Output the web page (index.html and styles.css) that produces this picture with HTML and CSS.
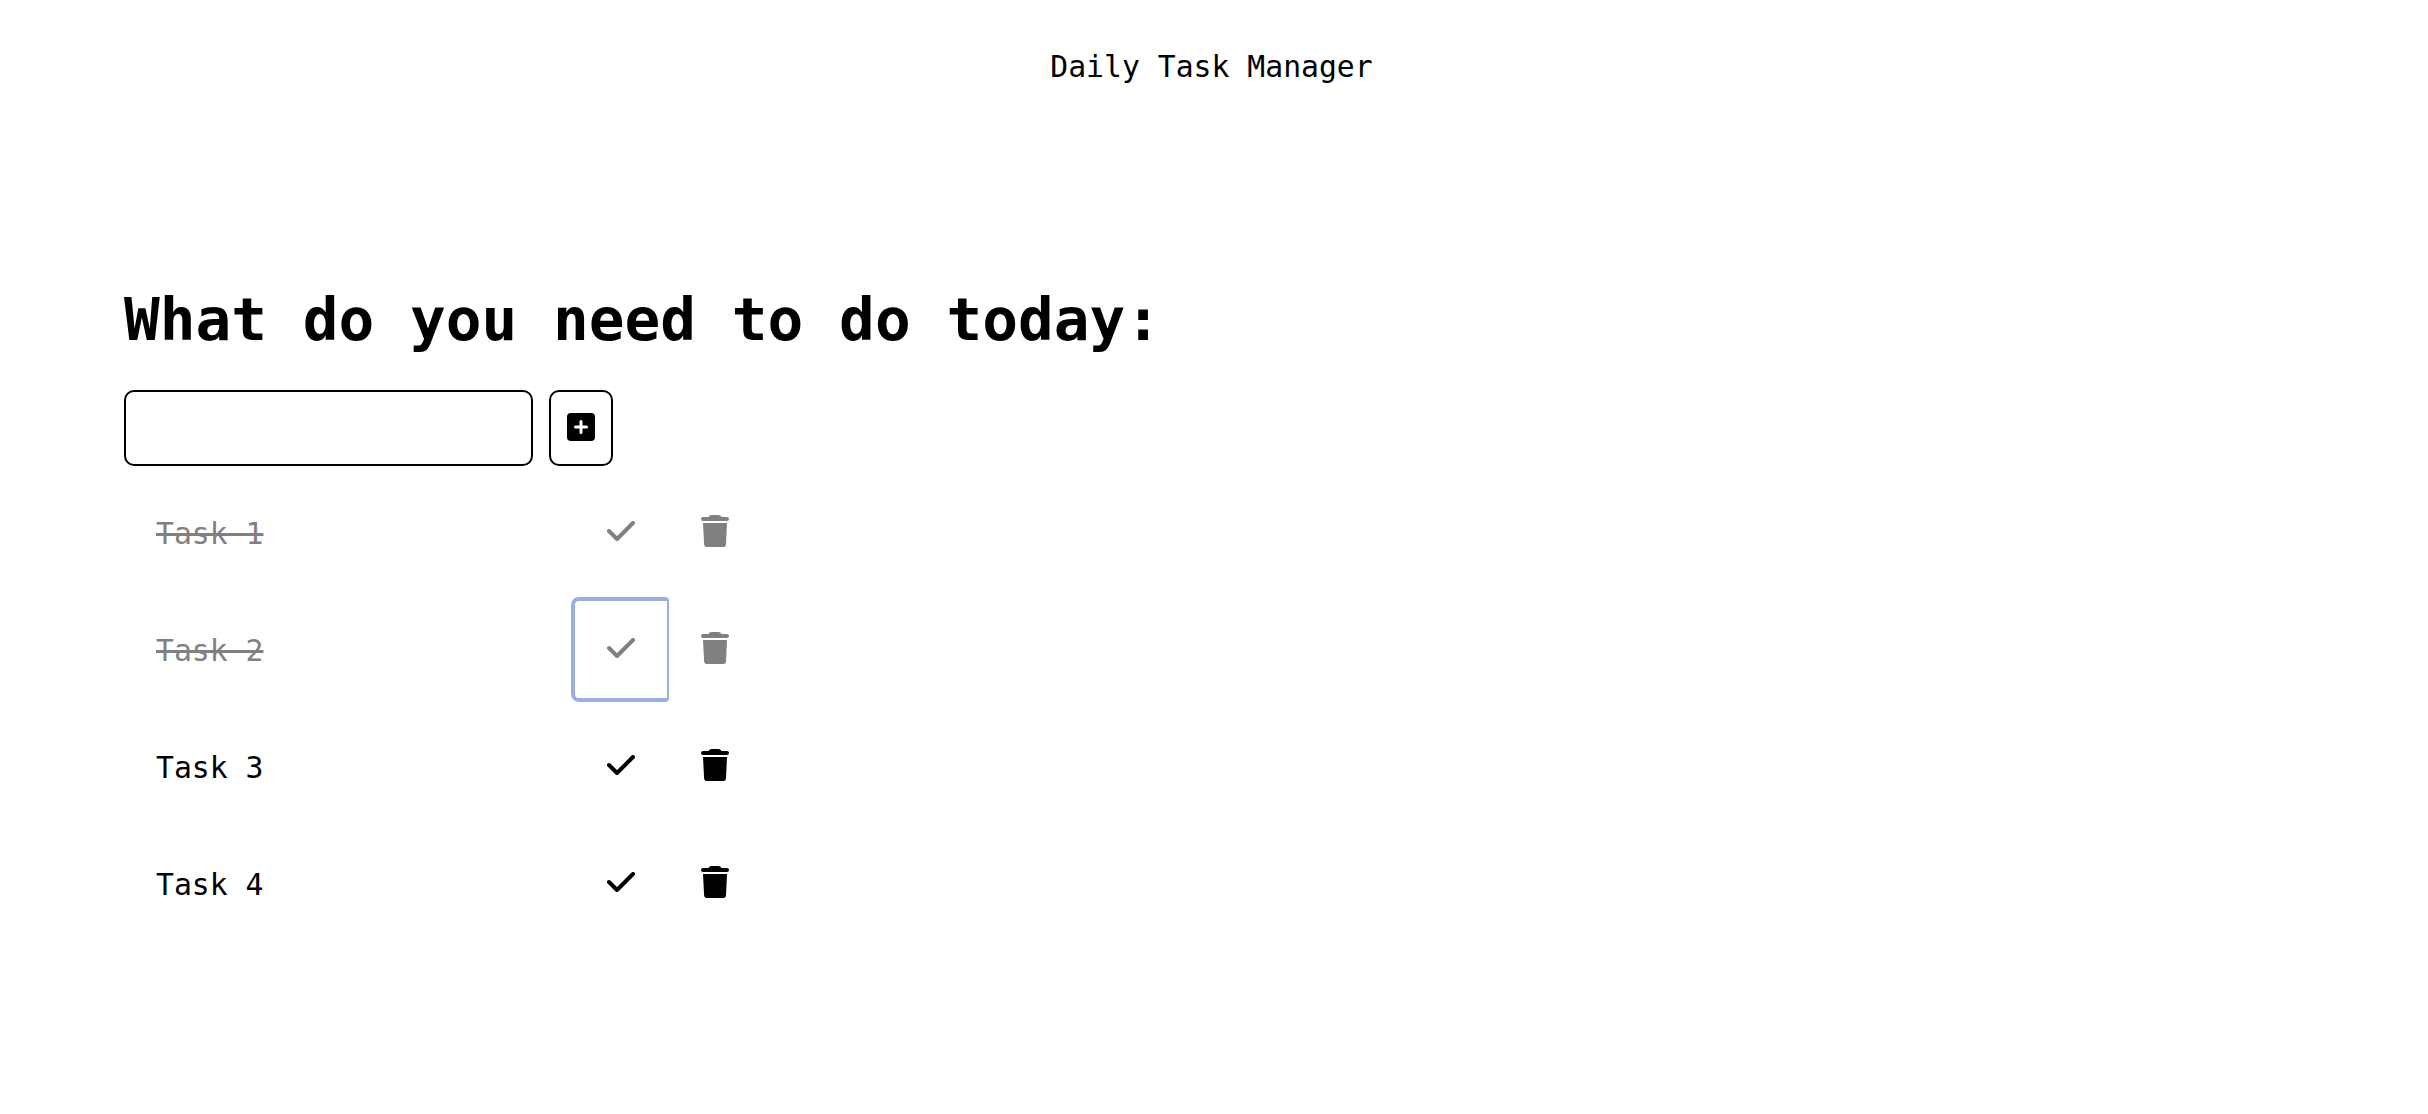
FILE: index.html
```html
<!DOCTYPE html>
<html lang="en">
<head>
<meta charset="utf-8">
<title>Daily Task Manager</title>
<link rel="stylesheet" href="styles.css">
</head>
<body>
<svg class="sprite" width="0" height="0" aria-hidden="true">
  <symbol id="check" viewBox="0 0 28 20"><path d="M2 10L10 18L26 2" fill="none" stroke="currentColor" stroke-width="4" stroke-linecap="round" stroke-linejoin="round"/></symbol>
  <symbol id="trash" viewBox="0 0 28 32"><path d="M2 2H7.500Q8.500 0 10.500 0H17.500Q19.500 0 20.500 2H26A2 2 0 0 1 26 6H2A2 2 0 0 1 2 2ZM2 8H26L25 29.200Q24.800 32 22 32H6Q3.300 32 3.100 29.200Z" fill="currentColor"/></symbol>
</svg>
<header class="header">Daily Task Manager</header>
<main class="main">
  <h1 class="heading">What do you need to do today:</h1>
  <form class="form">
    <input class="field" type="text" aria-label="New task">
    <button class="add" type="button" aria-label="Add task">
      <svg width="28" height="28" viewBox="0 0 28 28"><rect width="28" height="28" rx="4"/><path d="M14 8.500V19.500M8.500 14H19.500" stroke="#fff" stroke-width="3" stroke-linecap="round"/></svg>
    </button>
  </form>
  <ul class="list">
    <li class="task done"><span class="name">Task 1</span><button class="check" aria-label="Complete"><svg width="28" height="20"><use href="#check"/></svg></button><button class="trash" aria-label="Delete"><svg width="28" height="32"><use href="#trash"/></svg></button></li>
    <li class="task done"><span class="name">Task 2</span><button class="check focused" aria-label="Complete"><svg width="28" height="20"><use href="#check"/></svg></button><button class="trash" aria-label="Delete"><svg width="28" height="32"><use href="#trash"/></svg></button></li>
    <li class="task"><span class="name">Task 3</span><button class="check" aria-label="Complete"><svg width="28" height="20"><use href="#check"/></svg></button><button class="trash" aria-label="Delete"><svg width="28" height="32"><use href="#trash"/></svg></button></li>
    <li class="task"><span class="name">Task 4</span><button class="check" aria-label="Complete"><svg width="28" height="20"><use href="#check"/></svg></button><button class="trash" aria-label="Delete"><svg width="28" height="32"><use href="#trash"/></svg></button></li>
  </ul>
</main>
</body>
</html>
```
FILE: styles.css
```css
* { box-sizing: border-box; }
body {
  margin: 0;
  background: #fff;
  color: #000;
  font: 29.750px/40px "DejaVu Sans Mono", monospace;
}
svg { display: block; }
.sprite { position: absolute; }
button { padding: 0; background: none; color: inherit; font: inherit; }
.header {
  height: 133px;
  padding: 47px 5px 0 0;
  text-align: center;
}
.main { padding: 147px 0 0 124px; }
.heading {
  margin: 0;
  font-size: 59.400px;
  font-weight: 700;
  line-height: 80px;
}
.form { display: flex; gap: 16px; margin: 30px 0 0; }
.field, .add {
  height: 76px;
  border: 2px solid #000;
  border-radius: 10px;
}
.field { width: 409px; padding: 0 20px; font: inherit; }
.add {
  display: flex;
  width: 64px;
  padding: 21px 0 0 16px;
}
.list {
  display: flex;
  flex-direction: column;
  gap: 12px;
  margin: 14px 0 0;
  padding: 0 0 0 32px;
  list-style: none;
}
.task { display: flex; align-items: center; height: 105px; }
.name { width: 415px; padding-top: 2px; }
.check, .trash { display: flex; height: 105px; border: 4px solid transparent; }
.check {
  width: 98px;
  padding: 37px 0 0 32px;
  border-right-width: 2px;
  border-radius: 8px 4px 4px 8px;
}
.trash { width: 92px; padding: 31px 0 0 28px; }
.done { color: #808080; }
.done .name { text-decoration: line-through 3px; }
.focused { border-color: #9aaee4; }
```
